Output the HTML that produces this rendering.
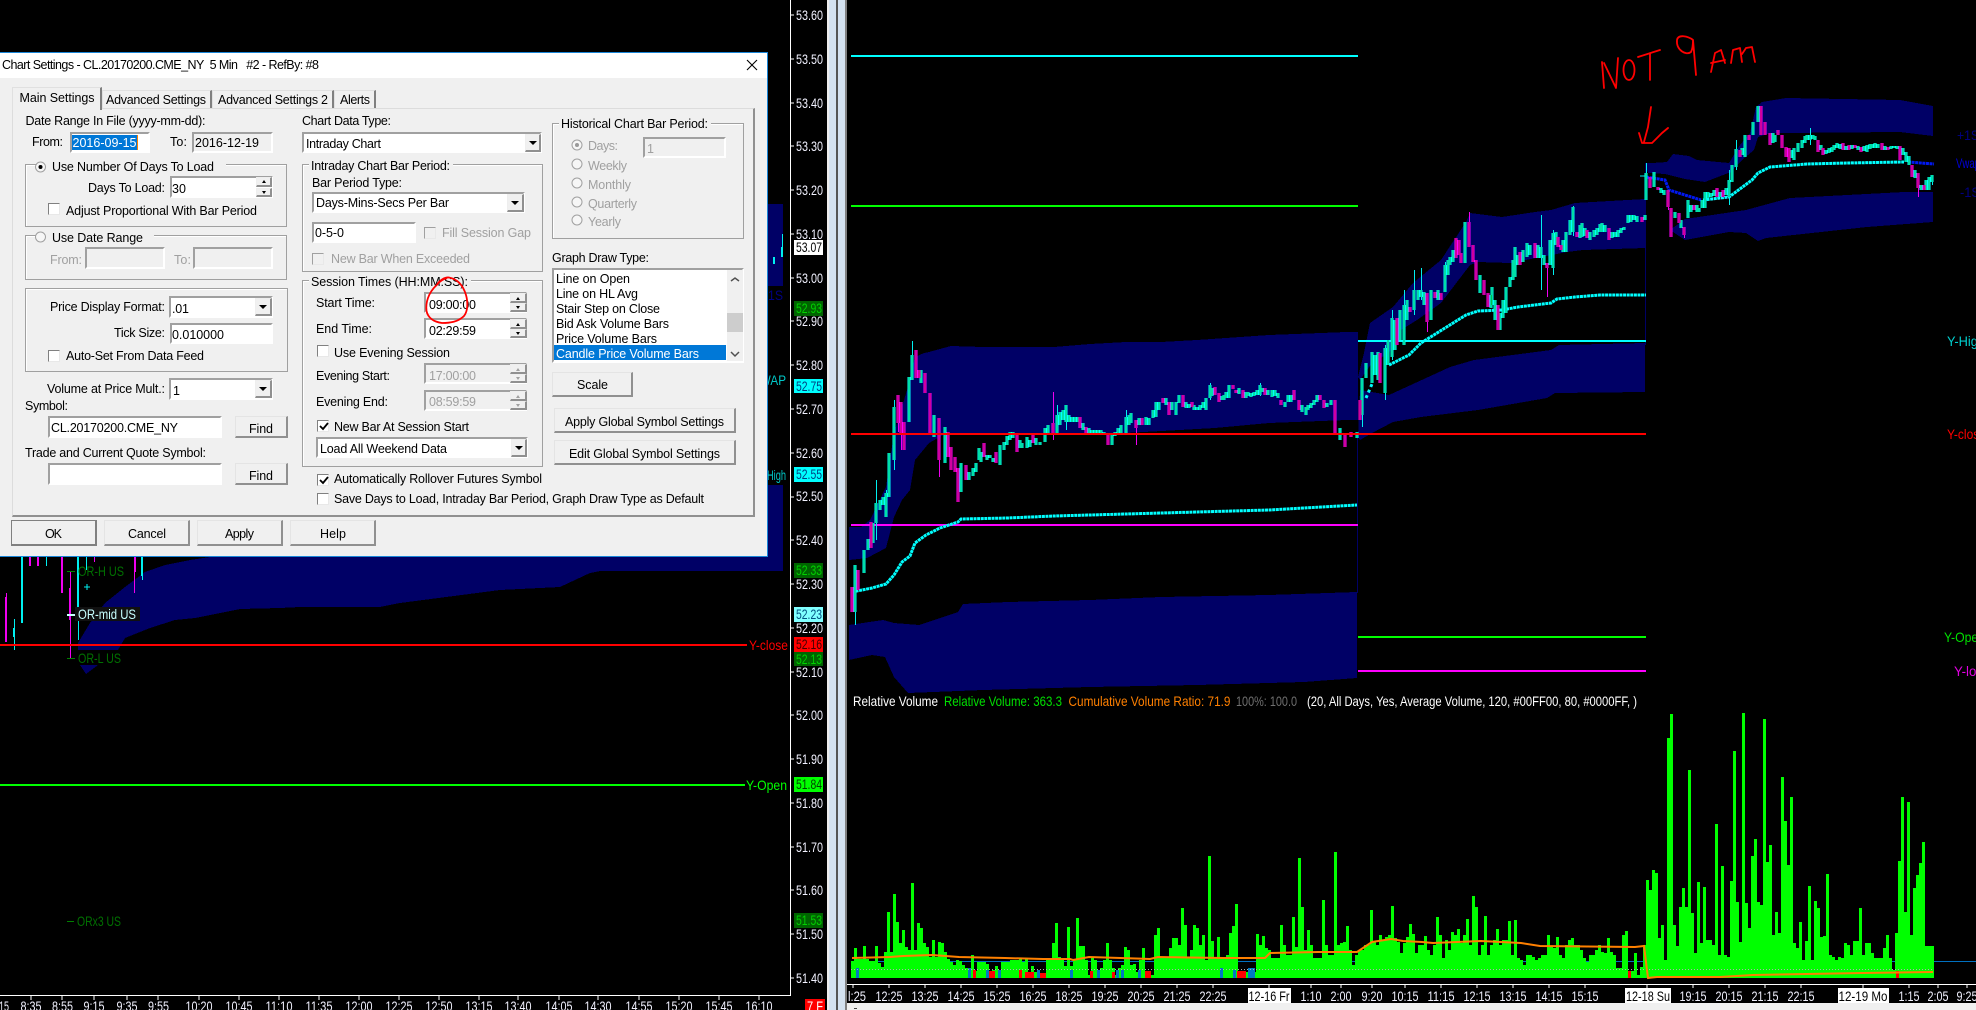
<!DOCTYPE html>
<html><head><meta charset="utf-8"><title>Chart Settings</title>
<style>
html,body{margin:0;padding:0;background:#000;width:1976px;height:1010px;overflow:hidden}
svg{position:absolute;left:0;top:0}
div{position:absolute;box-sizing:border-box}
.e{background:#fff;border:2px solid;border-color:#a0a0a0 #fff #fff #a0a0a0}
.r{background:#f0f0f0;border:2px solid;border-color:#a0a0a0 #fff #fff #a0a0a0}
.g{border:1px solid #a0a0a0;box-shadow:inset 1px 1px 0 #fff}
.b{background:#f0f0f0;border:solid;border-width:1px 2px 2px 1px;border-color:#e4e4e4 #909090 #909090 #e4e4e4}
.k{background:#f0f0f0;border:solid;border-width:1px 2px 2px 1px;border-color:#eee #909090 #909090 #eee}
.c{background:#fff;width:12px;height:12px;border:1px solid;border-color:#808080 #e8e8e8 #e8e8e8 #808080}
.x{background:#f0f0f0;width:12px;height:12px;border:1px solid;border-color:#a0a0a0 #e8e8e8 #e8e8e8 #a0a0a0}
.l{background:#f0f0f0}
.d text{font:12.5px "Liberation Sans",sans-serif;fill:#000}
.d .n text{fill:#a0a0a0}
.a text{font:14px "Liberation Sans",sans-serif;fill:#f2f2ff}
</style></head><body>

<svg width="1976" height="1010" viewBox="0 0 1976 1010" shape-rendering="crispEdges">
<defs>
<path id="u" fill="none" d="M855 565V612M864 550V573M868 539V550M873 523V543M876 503V523M880 500V510M883 497V505M886 493V517M889 453V497M894 407V460M909 377V422M912 355V380M921 370V383M934 415V437M945 427V463M961 463V492M969 472V480M973 468V476M976 463V472M979 448V460M981 452V462M987 455V460M990 455V458M993 458V462M1000 445V465M1004 442V450M1007 436V445M1010 432V440M1013 432V438M1020 440V448M1022 443V448M1027 437V448M1030 440V447M1036 438V445M1040 442V445M1045 428V442M1048 425V435M1057 415V433M1060 412V425M1063 410V420M1066 405V422M1069 415V422M1072 417V422M1075 417V422M1078 417V422M1083 423V430M1089 428V433M1092 430V433M1095 430V433M1098 430V433M1101 430V433M1104 432V435M1112 433V445M1115 432V436M1118 428V433M1121 425V433M1126 417V433M1129 415V425M1131 413V423M1139 418V425M1146 417V425M1149 418V425M1153 410V418M1156 402V417M1159 402V410M1166 398V405M1172 402V410M1176 402V415M1179 395V403M1186 402V408M1189 404V408M1194 405V410M1197 407V410M1200 405V410M1203 402V408M1206 398V410M1210 385V398M1212 388V396M1222 396V400M1224 395V400M1226 392V398M1229 385V398M1239 388V394M1246 392V398M1248 392V396M1251 393V397M1254 392V396M1257 390V395M1260 385V395M1262 388V392M1268 390V395M1272 390V397M1275 390V396M1278 393V398M1285 402V407M1288 395V402M1291 395V402M1302 405V412M1306 407V415M1308 405V410M1311 403V408M1314 400V405M1317 395V402M1327 403V407M1331 400V405M1340 428V440M1357 432V438M1362 378V415M1366 363V378M1372 352V383M1375 355V375M1378 352V380M1385 348V393M1388 340V365M1392 318V357M1395 320V350M1400 310V340M1404 305V345M1407 300V320M1414 290V310M1418 290V300M1421 290V297M1424 292V305M1431 290V320M1438 290V300M1445 265V292M1448 260V275M1450 257V265M1453 250V262M1465 222V263M1480 275V293M1491 295V308M1492 287V305M1495 300V320M1500 313V330M1503 300V318M1506 287V313M1510 277V287M1513 260V280M1515 247V277M1518 255V265M1523 250V262M1527 243V257M1530 245V255M1538 245V258M1541 247V258M1544 255V265M1550 240V265M1553 233V268M1556 232V245M1563 240V252M1566 232V252M1570 220V235M1573 207V232M1580 225V238M1582 223V237M1585 228V236M1590 232V240M1594 230V237M1597 228V235M1600 224V232M1602 223V232M1605 225V232M1612 232V238M1615 232V237M1618 230V237M1621 228V233M1624 227V230M1628 215V223M1631 215V222M1634 215V220M1637 216V222M1645 215V220M1646 173V200M1654 172V187M1661 188V193M1664 190V195M1675 212V218M1681 220V228M1688 200V218M1691 205V212M1697 205V212M1699 208V212M1702 200V208M1705 192V208M1708 192V198M1711 193V197M1714 190V196M1720 192V197M1726 188V195M1729 180V197M1732 165V182M1736 149V167M1742 148V155M1745 135V157M1753 122V135M1758 106V122M1773 133V143M1775 135V142M1791 150V158M1794 148V160M1798 143V152M1802 140V148M1805 136V143M1807 135V140M1810 135V140M1813 135V139M1815 136V140M1821 145V150M1826 150V154M1829 148V153M1832 147V152M1834 145V150M1837 143V148M1840 144V149M1846 146V150M1852 145V149M1858 146V150M1864 146V151M1867 145V152M1870 144V149M1872 144V148M1875 143V148M1878 144V148M1885 146V150M1891 146V149M1894 146V148M1897 146V149M1903 148V155M1906 152V162M1909 156V165M1915 170V178M1921 185V190M1926 180V190M1929 177V190M1932 175V182"/>
<path id="w" fill="none" d="M852 587V612M858 570V590M871 522V548M898 395V423M901 402V433M904 422V450M916 350V378M919 370V378M925 373V393M930 393V433M939 418V460M948 432V457M951 447V470M955 457V472M958 468V502M966 465V480M984 443V457M996 452V463M1017 433V452M1033 435V443M1053 423V433M1080 417V428M1086 427V433M1108 433V445M1136 420V428M1142 418V425M1163 398V403M1169 402V415M1183 395V407M1192 402V407M1215 387V395M1219 393V402M1233 385V389M1236 390V393M1243 390V398M1265 388V395M1281 400V405M1294 390V400M1299 400V410M1320 395V400M1324 400V408M1335 400V433M1345 433V447M1351 432V437M1360 400V420M1380 353V383M1397 318V345M1410 307V312M1427 293V322M1435 292V298M1441 293V300M1456 238V258M1459 240V255M1461 253V263M1469 222V247M1473 245V262M1476 260V280M1484 280V295M1488 293V307M1498 305V330M1520 252V265M1535 243V258M1547 263V268M1558 237V247M1561 245V250M1577 232V237M1587 230V238M1609 228V240M1642 217V222M1650 177V188M1658 187V190M1668 190V207M1671 208V237M1679 213V223M1684 227V235M1694 205V210M1717 188V197M1723 190V197M1740 150V157M1749 135V140M1761 106V135M1765 122V135M1770 133V145M1778 130V135M1782 135V148M1786 147V157M1789 148V162M1818 140V152M1823 148V155M1843 143V150M1849 145V150M1855 145V148M1861 147V152M1882 143V150M1888 147V150M1900 146V160M1912 165V177M1918 173V188M1924 185V190"/>
</defs>

<!-- left chart -->
<rect x="768" y="204" width="15" height="82" fill="#000066"/>
<path fill="#000066" d="M768 485H783V571H600L590 573 560 587 500 590 400 603 380 607 300 607 280 608 240 609 195 618 175 620 150 628 125 638 118 650 78 650 78 643 90 623 105 603 125 587 145 572 165 565 190 560 210 557H768Z"/>
<path fill="#000066" d="M80 665H98L86 674Z"/>
<g fill="none" stroke-width="2">
<path stroke="#f000f0" d="M6 597V642M30 557V566M38 557V566M62 557V593M70 588V620M135 557V572"/>
<path stroke="#00f0f0" d="M14 628V637M22 557V623M78 557V615M142 557V576M782 247V257M774 257V264"/>
</g>
<g fill="none" stroke-width="1">
<path stroke="#f000f0" d="M6.500 593V597M70.500 572V658M134.500 572V593M46.500 557V560M94.500 557V562"/>
<path stroke="#00f0f0" d="M14.500 619V650M46.500 557V566M78.500 615V640M86.500 557V570M142.500 576V580M782.500 234V247M84 587H90M87 584V590"/>
<path stroke="#008000" d="M67 571.500H75M67 658.500H75M67 921.500H74"/>
<path stroke="#c8ffff" stroke-width="2" d="M67 615H75"/>
</g>
<rect x="75" y="607" width="65" height="14" fill="#101010"/>
<rect x="0" y="644" width="747" height="2" fill="#ff0000"/>
<rect x="0" y="784" width="745" height="2" fill="#00ff00"/>

<!-- right chart bands -->
<g fill="#000066">
<path d="M849 527L861 527 870 520 886 487 894 433 908 387 915 357 924 353 929 352 951 346 983 347 1054 347 1090 344 1126 342 1161 342 1197 340 1269 335 1347 332V420L1269 423 1215 428 1126 433 947 433 929 443 915 460 910 490 902 500 894 517 886 548 867 558 849 560Z"/>
<path d="M849 625L883 620 894 623 919 625 958 612 963 604 1008 602 1090 600 1161 597 1269 595 1357 592V678L1304 682 1197 685 1090 687 983 690 908 693 894 677 885 657 872 655 849 660Z"/>
<path d="M1340 332H1358V420H1340Z"/>
<path d="M1358 377L1364 353 1370 323 1393 307 1413 283 1441 260 1466 222 1470 213 1502 217 1535 212 1551 210 1575 203 1645 199V248L1583 250 1567 252 1510 263 1478 262 1470 265 1441 303 1417 320 1401 330 1389 353 1372 363 1360 380Z"/>
<path d="M1360 390L1389 395 1437 373 1450 367 1474 360 1551 350 1559 345 1645 343V392L1555 393 1547 398 1478 410 1421 417 1393 422 1372 433 1360 440 1358 437Z"/>
<path d="M1645 163L1652 163 1667 162 1673 154 1689 156 1697 160 1729 163 1740 145 1750 133 1756 107 1762 102 1786 98 1900 100 1933 106V136L1900 132 1782 133 1770 133 1758 137 1754 150 1742 160 1731 172 1705 182 1685 179 1665 174 1648 173Z"/>
<path d="M1685 219L1746 210 1790 198 1904 192 1933 192V222L1867 227 1766 238 1758 241 1746 233 1729 232 1685 240 1670 230Z"/>
<rect x="1357" y="433" width="1" height="160"/>
<rect x="1645" y="163" width="1" height="182"/>
</g>

<!-- level lines -->
<rect x="851" y="55" width="507" height="2" fill="#00ffff"/>
<rect x="851" y="205" width="507" height="2" fill="#00ff00"/>
<rect x="851" y="524" width="507" height="2" fill="#ff00ff"/>
<rect x="1358" y="340" width="288" height="2" fill="#00ffff"/>
<rect x="1358" y="636" width="288" height="2" fill="#00ff00"/>
<rect x="1358" y="670" width="288" height="2" fill="#ff00ff"/>

<!-- vwap -->
<g fill="none" shape-rendering="auto">
<polyline stroke="#00ffff" stroke-width="3" stroke-dasharray="3 0.600" points="852,592 872,588 886,584 894,575 902,562 910,556 915,543 926,535 940,528 958,522 961,519 1008,518 1054,516 1126,514 1197,512 1269,510 1304,508 1357,505"/>
<polyline stroke="#00ffff" stroke-width="3" stroke-dasharray="3 0.600" points="1389,365 1409,355 1421,343 1445,328 1466,315 1478,311 1502,310 1518,307 1551,303 1557,299 1575,297 1600,295 1646,295"/>
<polyline stroke="#00ffff" stroke-width="3" stroke-dasharray="3 0.600" points="1703,200 1729,197 1752,180 1758,173 1770,167 1807,164 1847,163 1904,162"/>
<polyline stroke="#0018f0" stroke-width="3" stroke-dasharray="3 0.600" points="1646,177 1665,180 1669,190 1701,200"/>
<polyline stroke="#0018f0" stroke-width="3" stroke-dasharray="3 0.600" points="1908,162 1934,164"/>
<polyline stroke="#00ffff" stroke-width="3" stroke-dasharray="3 3" points="1366,398 1372,384"/>
</g>

<!-- wicks -->
<g fill="none" stroke-width="1">
<path stroke="#00f0f0" d="M855.500 565V625M876.500 480V540M886.500 490V510M894.500 400V470M912.500 341V360M1057.500 405V435M1066.500 405V430M1126.500 410V435M1210.500 383V400M1260.500 383V396M1362.500 378V427M1385.500 345V400M1392.500 310V360M1404.500 290V345M1414.500 270V315M1421.500 268V300M1445.500 262V292M1541.500 215V290M1553.500 230V275M1573.500 206V236M1646.500 163V200M1729.500 170V205M1736.500 140V170M1810.500 128V145M1932.500 175V185M1640 176H1646"/>
<path stroke="#f000f0" d="M898.500 395V432M939.500 418V477M958.500 468V502M901.500 402V450M1053.500 392V440M1017.500 433V452M1136.500 420V445M1345.500 433V447M1427.500 293V332M1469.500 212V247M1547.500 263V297M1668.500 190V210M1671.500 208V237M1684.500 227V238M1761.500 106V135M1918.500 173V197"/>
</g>

<!-- candles -->
<use href="#u" stroke="#00ffff" stroke-width="3"/>
<use href="#w" stroke="#ff00ff" stroke-width="3"/>
<use href="#u" stroke="#00c050" stroke-width="1"/>
<use href="#w" stroke="#a00040" stroke-width="1"/>
<rect x="851" y="433" width="795" height="2" fill="#ff0000"/>

<!-- volume -->
<rect x="851" y="961" width="1125" height="1" fill="#0070c0"/>
<path fill="#00ff00" d="M851 978V961H854V948H857V959H863V946H866V959H869V961H875V946H878V963H881V967H884V952H887V912H890V952H893V894H896V922H899V943H902V930H905V947H908V950H911V883H914V950H917V923H920V928H923V943H926V947H929V957H932V940H935V957H938V942H941V943H944V952H947V959H950V962H953V965H956V960H959V961H962V965H965V968H971V955H974V971H977V962H986V964H989V972H992V970H995V966H998V972H1001V962H1010V960H1019V958H1022V962H1025V958H1028V972H1031V966H1034V972H1040V974H1046V959H1052V943H1055V923H1058V957H1061V959H1064V966H1067V927H1070V966H1073V960H1076V918H1079V946H1085V960H1088V975H1091V958H1094V960H1097V975H1100V968H1103V960H1106V943H1109V960H1112V968H1115V975H1118V968H1121V965H1124V947H1127V950H1130V965H1133V964H1136V972H1139V960H1142V948H1145V975H1154V935H1157V928H1160V958H1169V948H1172V938H1178V945H1181V908H1184V925H1187V958H1190V950H1193V925H1196V928H1199V945H1202V935H1205V960H1208V856H1211V941H1214V958H1217V937H1220V958H1226V955H1229V933H1232V926H1235V904H1238V972H1256V934H1259V945H1262V936H1265V948H1268V950H1271V958H1280V925H1283V945H1286V955H1292V917H1295V947H1298V858H1301V907H1304V950H1307V930H1310V945H1313V958H1322V900H1325V945H1328V955H1334V852H1337V945H1340V943H1343V942H1346V926H1349V950H1352V965H1355V955H1358V950H1364V945H1370V910H1373V942H1376V945H1379V935H1382V940H1385V937H1388V935H1391V906H1394V938H1397V942H1400V953H1403V943H1406V937H1409V924H1412V934H1415V953H1418V945H1424V936H1427V950H1430V955H1433V945H1436V917H1439V935H1442V958H1445V940H1448V950H1451V932H1454V935H1457V929H1460V943H1463V935H1466V919H1469V945H1472V896H1475V907H1478V955H1481V945H1484V916H1487V955H1490V945H1493V940H1496V929H1499V945H1502V940H1508V921H1511V955H1514V920H1517V958H1520V960H1523V965H1526V955H1532V957H1535V960H1538V958H1541V955H1547V935H1550V947H1553V948H1556V937H1559V955H1562V958H1565V945H1568V940H1571V938H1574V945H1580V950H1583V958H1586V962H1589V955H1595V950H1598V945H1601V952H1604V953H1607V938H1610V952H1613V955H1616V968H1622V935H1625V931H1628V971H1634V953H1637V975H1640V967H1643V945H1646V880H1649V890H1652V870H1655V873H1658V938H1661V925H1664V960H1667V738H1670V714H1673V925H1676V946H1679V907H1682V888H1685V907H1688V770H1691V913H1694V953H1697V882H1700V943H1703V887H1706V940H1712V945H1715V824H1718V955H1721V866H1724V955H1727V957H1730V881H1733V751H1736V902H1739V942H1742V713H1745V903H1748V928H1751V856H1754V839H1757V902H1760V905H1763V719H1766V862H1769V845H1772V935H1775V912H1778V933H1781V777H1784V821H1787V865H1790V797H1793V943H1796V948H1799V922H1802V960H1805V941H1808V886H1811V960H1814V901H1817V908H1820V937H1823V936H1826V874H1829V955H1832V957H1835V960H1838V957H1841V958H1844V943H1847V945H1850V955H1853V941H1859V908H1862V955H1865V943H1871V953H1874V958H1883V948H1886V935H1889V958H1892V970H1895V933H1898V861H1901V797H1904V912H1907V802H1910V935H1913V888H1916V875H1919V863H1922V842H1925V946H1934V978Z"/>
<path fill="#ff0000" d="M973 970h3v8h-3zM989 971h6v7h-6zM1019 970h3v8h-3zM1025 972h9v6h-9zM1040 973h6v5h-6zM1090 971h3v7h-3zM1112 972h3v6h-3zM1145 971h6v7h-6zM1237 971h9v7h-9zM1628 971h3v7h-3zM1896 971h3v7h-3z"/>
<path fill="#0078c0" d="M856 968h3v10h-3zM968 968h3v10h-3zM986 970h3v8h-3zM998 970h3v8h-3zM1037 970h3v8h-3zM1070 970h3v8h-3zM1097 970h3v8h-3zM1116 970h3v8h-3zM1121 970h3v8h-3zM1138 970h3v8h-3zM1220 968h3v10h-3zM1233 970h3v8h-3zM1248 968h7v10h-7z"/>
<path stroke="#b0b0b0" fill="none" stroke-dasharray="1 2" d="M851 969.500H1934"/>
<g fill="none" shape-rendering="auto" stroke="#ff8000" stroke-width="2">
<polyline points="852,958 890,957 903,956 932,955 959,957 1005,958 1043,959 1070,959 1073,960 1089,957 1150,959 1158,957 1223,958 1265,958 1270,953 1318,952 1357,952 1372,942 1391,939 1403,941 1422,942 1433,943 1481,941 1521,943 1540,946 1635,947 1644,946 1648,978 1657,977 1720,977 1753,975 1863,973 1933,972"/>
</g>

<!-- axes -->
<rect x="790" y="0" width="1" height="995" fill="#fff"/>
<rect x="0" y="995" width="791" height="1" fill="#fff"/>
<rect x="847" y="984" width="1129" height="1" fill="#fff"/>
<path stroke="#fff" fill="none" d="M791 15h3M791 59h3M791 103h3M791 146h3M791 190h3M791 234h3M791 278h3M791 321h3M791 365h3M791 409h3M791 453h3M791 497h3M791 540h3M791 584h3M791 628h3M791 672h3M791 715h3M791 759h3M791 803h3M791 847h3M791 890h3M791 934h3M791 978h3M31 996v4M62 996v4M94 996v4M127 996v4M158 996v4M199 996v4M239 996v4M279 996v4M319 996v4M359 996v4M399 996v4M439 996v4M479 996v4M518 996v4M559 996v4M598 996v4M639 996v4M679 996v4M719 996v4M759 996v4M853 985v3M889 985v3M925 985v3M961 985v3M997 985v3M1033 985v3M1069 985v3M1105 985v3M1141 985v3M1177 985v3M1213 985v3M1269 985v3M1311 985v3M1341 985v3M1372 985v3M1405 985v3M1441 985v3M1477 985v3M1513 985v3M1549 985v3M1585 985v3M1647 985v3M1693 985v3M1729 985v3M1765 985v3M1801 985v3M1863 985v3M1909 985v3M1938 985v3M1967 985v3"/>

<!-- separator -->
<rect x="827" y="0" width="2" height="1010" fill="#eeeeee"/>
<rect x="829" y="0" width="7" height="1010" fill="#d4e2f0"/>
<rect x="836" y="0" width="2" height="1010" fill="#555555"/>
<rect x="838" y="0" width="7" height="1010" fill="#d4e2f0"/>
<rect x="845" y="0" width="2" height="1010" fill="#808080"/>
<rect x="847" y="1003" width="1129" height="7" fill="#f0f0f0"/>
<rect x="854" y="1008" width="3" height="1" fill="#444"/>
<rect x="805" y="999" width="20" height="11" fill="#ff0000"/>

<!-- price label boxes -->
<rect x="794" y="240" width="29" height="15" fill="#ffffff"/>
<rect x="794" y="301" width="29" height="15" fill="#006400"/>
<rect x="794" y="379" width="29" height="14" fill="#00ffff"/>
<rect x="794" y="467" width="29" height="15" fill="#00ffff"/>
<rect x="794" y="563" width="29" height="15" fill="#006400"/>
<rect x="794" y="607" width="29" height="15" fill="#80ffff"/>
<rect x="794" y="637" width="29" height="15" fill="#ff0000"/>
<rect x="794" y="652" width="29" height="14" fill="#006400"/>
<rect x="794" y="777" width="29" height="15" fill="#00ff00"/>
<rect x="794" y="913" width="29" height="15" fill="#006400"/>
<rect x="1248" y="988" width="43" height="15" fill="#fff"/>
<rect x="1625" y="988" width="46" height="15" fill="#fff"/>
<rect x="1838" y="988" width="51" height="15" fill="#fff"/>
</svg>

<svg width="1976" height="1010" viewBox="0 0 1976 1010" class="a">
<g>
<text x="796" y="20" textLength="27" lengthAdjust="spacingAndGlyphs">53.60</text>
<text x="796" y="64" textLength="27" lengthAdjust="spacingAndGlyphs">53.50</text>
<text x="796" y="108" textLength="27" lengthAdjust="spacingAndGlyphs">53.40</text>
<text x="796" y="151" textLength="27" lengthAdjust="spacingAndGlyphs">53.30</text>
<text x="796" y="195" textLength="27" lengthAdjust="spacingAndGlyphs">53.20</text>
<text x="796" y="239" textLength="27" lengthAdjust="spacingAndGlyphs">53.10</text>
<text x="796" y="283" textLength="27" lengthAdjust="spacingAndGlyphs">53.00</text>
<text x="796" y="326" textLength="27" lengthAdjust="spacingAndGlyphs">52.90</text>
<text x="796" y="370" textLength="27" lengthAdjust="spacingAndGlyphs">52.80</text>
<text x="796" y="414" textLength="27" lengthAdjust="spacingAndGlyphs">52.70</text>
<text x="796" y="458" textLength="27" lengthAdjust="spacingAndGlyphs">52.60</text>
<text x="796" y="501" textLength="27" lengthAdjust="spacingAndGlyphs">52.50</text>
<text x="796" y="545" textLength="27" lengthAdjust="spacingAndGlyphs">52.40</text>
<text x="796" y="589" textLength="27" lengthAdjust="spacingAndGlyphs">52.30</text>
<text x="796" y="633" textLength="27" lengthAdjust="spacingAndGlyphs">52.20</text>
<text x="796" y="677" textLength="27" lengthAdjust="spacingAndGlyphs">52.10</text>
<text x="796" y="720" textLength="27" lengthAdjust="spacingAndGlyphs">52.00</text>
<text x="796" y="764" textLength="27" lengthAdjust="spacingAndGlyphs">51.90</text>
<text x="796" y="808" textLength="27" lengthAdjust="spacingAndGlyphs">51.80</text>
<text x="796" y="852" textLength="27" lengthAdjust="spacingAndGlyphs">51.70</text>
<text x="796" y="895" textLength="27" lengthAdjust="spacingAndGlyphs">51.60</text>
<text x="796" y="939" textLength="27" lengthAdjust="spacingAndGlyphs">51.50</text>
<text x="796" y="983" textLength="27" lengthAdjust="spacingAndGlyphs">51.40</text>
</g>
<text x="796" y="252" textLength="26" lengthAdjust="spacingAndGlyphs" style="fill:#000">53.07</text>
<text x="796" y="313" textLength="26" lengthAdjust="spacingAndGlyphs" style="fill:#00d000">52.93</text>
<text x="796" y="391" textLength="26" lengthAdjust="spacingAndGlyphs" style="fill:#004080">52.75</text>
<text x="796" y="479" textLength="26" lengthAdjust="spacingAndGlyphs" style="fill:#004080">52.55</text>
<text x="796" y="575" textLength="26" lengthAdjust="spacingAndGlyphs" style="fill:#00d000">52.33</text>
<text x="796" y="619" textLength="26" lengthAdjust="spacingAndGlyphs" style="fill:#005080">52.23</text>
<text x="796" y="649" textLength="26" lengthAdjust="spacingAndGlyphs" style="fill:#400000">52.16</text>
<text x="796" y="664" textLength="26" lengthAdjust="spacingAndGlyphs" style="fill:#00d000">52.13</text>
<text x="796" y="789" textLength="26" lengthAdjust="spacingAndGlyphs" style="fill:#004000">51.84</text>
<text x="796" y="925" textLength="26" lengthAdjust="spacingAndGlyphs" style="fill:#00d000">51.53</text>
<text x="752" y="385" style="fill:#00c8c8" textLength="34" lengthAdjust="spacingAndGlyphs">VWAP</text>
<text x="750" y="480" style="fill:#00c8c8" textLength="36" lengthAdjust="spacingAndGlyphs">OR-High</text>
<text x="768" y="300" style="fill:#000080" textLength="15" lengthAdjust="spacingAndGlyphs">1S</text>
<text x="749" y="650" style="fill:#ff0000" textLength="39" lengthAdjust="spacingAndGlyphs">Y-close</text>
<text x="746" y="790" style="fill:#00ff00" textLength="41" lengthAdjust="spacingAndGlyphs">Y-Open</text>
<text x="78" y="576" style="fill:#007000" textLength="46" lengthAdjust="spacingAndGlyphs">OR-H US</text>
<text x="78" y="619" style="fill:#c8ffff" textLength="58" lengthAdjust="spacingAndGlyphs">OR-mid US</text>
<text x="78" y="663" style="fill:#007000" textLength="43" lengthAdjust="spacingAndGlyphs">OR-L US</text>
<text x="77" y="926" style="fill:#007000" textLength="44" lengthAdjust="spacingAndGlyphs">ORx3 US</text>
<text x="807" y="1011" style="fill:#fff" textLength="16" lengthAdjust="spacingAndGlyphs">7 F</text>
<g text-anchor="middle">
<text x="4" y="1011" textLength="10" lengthAdjust="spacingAndGlyphs">15</text>
<text x="31" y="1011" textLength="21" lengthAdjust="spacingAndGlyphs">8:35</text>
<text x="62.500" y="1011" textLength="21" lengthAdjust="spacingAndGlyphs">8:55</text>
<text x="94" y="1011" textLength="21" lengthAdjust="spacingAndGlyphs">9:15</text>
<text x="127" y="1011" textLength="21" lengthAdjust="spacingAndGlyphs">9:35</text>
<text x="158.500" y="1011" textLength="21" lengthAdjust="spacingAndGlyphs">9:55</text>
<text x="199" y="1011" textLength="27" lengthAdjust="spacingAndGlyphs">10:20</text>
<text x="239" y="1011" textLength="27" lengthAdjust="spacingAndGlyphs">10:45</text>
<text x="279" y="1011" textLength="27" lengthAdjust="spacingAndGlyphs">11:10</text>
<text x="319" y="1011" textLength="27" lengthAdjust="spacingAndGlyphs">11:35</text>
<text x="359" y="1011" textLength="27" lengthAdjust="spacingAndGlyphs">12:00</text>
<text x="399" y="1011" textLength="27" lengthAdjust="spacingAndGlyphs">12:25</text>
<text x="439" y="1011" textLength="27" lengthAdjust="spacingAndGlyphs">12:50</text>
<text x="479" y="1011" textLength="27" lengthAdjust="spacingAndGlyphs">13:15</text>
<text x="518" y="1011" textLength="27" lengthAdjust="spacingAndGlyphs">13:40</text>
<text x="559" y="1011" textLength="27" lengthAdjust="spacingAndGlyphs">14:05</text>
<text x="598" y="1011" textLength="27" lengthAdjust="spacingAndGlyphs">14:30</text>
<text x="639" y="1011" textLength="27" lengthAdjust="spacingAndGlyphs">14:55</text>
<text x="679" y="1011" textLength="27" lengthAdjust="spacingAndGlyphs">15:20</text>
<text x="719" y="1011" textLength="27" lengthAdjust="spacingAndGlyphs">15:45</text>
<text x="759" y="1011" textLength="27" lengthAdjust="spacingAndGlyphs">16:10</text>
<text x="857" y="1001" textLength="18" lengthAdjust="spacingAndGlyphs">l:25</text>
<text x="889" y="1001" textLength="27" lengthAdjust="spacingAndGlyphs">12:25</text>
<text x="925" y="1001" textLength="27" lengthAdjust="spacingAndGlyphs">13:25</text>
<text x="961" y="1001" textLength="27" lengthAdjust="spacingAndGlyphs">14:25</text>
<text x="997" y="1001" textLength="27" lengthAdjust="spacingAndGlyphs">15:25</text>
<text x="1033" y="1001" textLength="27" lengthAdjust="spacingAndGlyphs">16:25</text>
<text x="1069" y="1001" textLength="27" lengthAdjust="spacingAndGlyphs">18:25</text>
<text x="1105" y="1001" textLength="27" lengthAdjust="spacingAndGlyphs">19:25</text>
<text x="1141" y="1001" textLength="27" lengthAdjust="spacingAndGlyphs">20:25</text>
<text x="1177" y="1001" textLength="27" lengthAdjust="spacingAndGlyphs">21:25</text>
<text x="1213" y="1001" textLength="27" lengthAdjust="spacingAndGlyphs">22:25</text>
<text x="1269" y="1001" textLength="41" lengthAdjust="spacingAndGlyphs" style="fill:#000">12-16 Fr</text>
<text x="1311" y="1001" textLength="21" lengthAdjust="spacingAndGlyphs">1:10</text>
<text x="1341" y="1001" textLength="21" lengthAdjust="spacingAndGlyphs">2:00</text>
<text x="1372" y="1001" textLength="21" lengthAdjust="spacingAndGlyphs">9:20</text>
<text x="1405" y="1001" textLength="27" lengthAdjust="spacingAndGlyphs">10:15</text>
<text x="1441" y="1001" textLength="27" lengthAdjust="spacingAndGlyphs">11:15</text>
<text x="1477" y="1001" textLength="27" lengthAdjust="spacingAndGlyphs">12:15</text>
<text x="1513" y="1001" textLength="27" lengthAdjust="spacingAndGlyphs">13:15</text>
<text x="1549" y="1001" textLength="27" lengthAdjust="spacingAndGlyphs">14:15</text>
<text x="1585" y="1001" textLength="27" lengthAdjust="spacingAndGlyphs">15:15</text>
<text x="1648" y="1001" textLength="44" lengthAdjust="spacingAndGlyphs" style="fill:#000">12-18 Su</text>
<text x="1693" y="1001" textLength="27" lengthAdjust="spacingAndGlyphs">19:15</text>
<text x="1729" y="1001" textLength="27" lengthAdjust="spacingAndGlyphs">20:15</text>
<text x="1765" y="1001" textLength="27" lengthAdjust="spacingAndGlyphs">21:15</text>
<text x="1801" y="1001" textLength="27" lengthAdjust="spacingAndGlyphs">22:15</text>
<text x="1863" y="1001" textLength="49" lengthAdjust="spacingAndGlyphs" style="fill:#000">12-19 Mo</text>
<text x="1909" y="1001" textLength="21" lengthAdjust="spacingAndGlyphs">1:15</text>
<text x="1938" y="1001" textLength="21" lengthAdjust="spacingAndGlyphs">2:05</text>
<text x="1967" y="1001" textLength="21" lengthAdjust="spacingAndGlyphs">9:25</text>
</g>
<text x="853" y="706" textLength="85" lengthAdjust="spacingAndGlyphs" style="fill:#fff">Relative Volume</text>
<text x="944" y="706" textLength="118" lengthAdjust="spacingAndGlyphs" style="fill:#00e000">Relative Volume: 363.3</text>
<text x="1068.500" y="706" textLength="162" lengthAdjust="spacingAndGlyphs" style="fill:#ff8000">Cumulative Volume Ratio: 71.9</text>
<text x="1236" y="706" textLength="61" lengthAdjust="spacingAndGlyphs" style="fill:#707070">100%: 100.0</text>
<text x="1307" y="706" textLength="330" lengthAdjust="spacingAndGlyphs" style="fill:#fff">(20, All Days, Yes, Average Volume, 120, #00FF00, 80, #0000FF, )</text>
<text x="1957" y="140" style="fill:#000080" textLength="22" lengthAdjust="spacingAndGlyphs">+1S</text>
<text x="1956" y="168" style="fill:#0000e0" textLength="24" lengthAdjust="spacingAndGlyphs">Vwap</text>
<text x="1960" y="197" style="fill:#000080" textLength="20" lengthAdjust="spacingAndGlyphs">-1S</text>
<text x="1947" y="346" style="fill:#00d0d0" textLength="38" lengthAdjust="spacingAndGlyphs">Y-High</text>
<text x="1947" y="439" style="fill:#ff0000" textLength="39" lengthAdjust="spacingAndGlyphs">Y-close</text>
<text x="1944" y="642" style="fill:#00e000" textLength="41" lengthAdjust="spacingAndGlyphs">Y-Open</text>
<text x="1954" y="676" style="fill:#e000e0" textLength="32" lengthAdjust="spacingAndGlyphs">Y-low</text>
<g fill="none" stroke="#ff0000" stroke-width="1.800" stroke-linecap="round" stroke-linejoin="round">
<path d="M1602 62L1604 88M1604 63L1616 88 1618 58"/>
<ellipse cx="1629" cy="70" rx="5.500" ry="10"/>
<path d="M1638 57L1660 50M1650 53L1650 80"/>
<path d="M1693 40C1688 36 1678 34 1677 40C1676 50 1686 56 1691 52C1693 48 1693 44 1693 40L1696 75"/>
<path d="M1711 72L1715 53 1721 50 1725 63M1711 63L1725 60"/>
<path d="M1731 63L1733 50 1740 48 1742 62M1742 54L1746 48 1752 47 1755 62"/>
<path d="M1651 107L1648 127 1644 142M1639 133L1642 143 1652 143 1662 133 1668 128"/>
</g>
</svg>

<!-- dialog -->
<div style="left:-2px;top:52px;width:770px;height:505px;background:#f0f0f0;border:1px solid #1a86d8"></div>
<div style="left:0;top:53px;width:767px;height:25px;background:#fff"></div>
<div style="left:12px;top:108px;width:743px;height:409px;background:#f0f0f0;border:solid;border-width:1px 2px 2px 1px;border-color:#dcdcdc #909090 #909090 #dcdcdc"></div>
<!-- tabs -->
<div style="left:102px;top:90px;width:110px;height:18px;background:#f0f0f0;border:solid;border-width:1px 2px 0 1px;border-color:#e0e0e0 #808080 #e0e0e0 #e0e0e0"></div>
<div style="left:212px;top:90px;width:122px;height:18px;background:#f0f0f0;border:solid;border-width:1px 2px 0 1px;border-color:#e0e0e0 #808080 #e0e0e0 #e0e0e0"></div>
<div style="left:334px;top:90px;width:42px;height:18px;background:#f0f0f0;border:solid;border-width:1px 2px 0 1px;border-color:#e0e0e0 #808080 #e0e0e0 #e0e0e0"></div>
<div style="left:12px;top:87px;width:90px;height:23px;background:#f0f0f0;border:solid;border-width:1px 2px 0 1px;border-color:#e0e0e0 #808080 #e0e0e0 #e0e0e0"></div>

<!-- groups -->
<div class="g" style="left:25px;top:164px;width:262px;height:63px"></div>
<div class="l" style="left:36px;top:160px;width:190px;height:8px"></div>
<div class="g" style="left:25px;top:235px;width:262px;height:45px"></div>
<div class="l" style="left:36px;top:231px;width:118px;height:8px"></div>
<div class="g" style="left:25px;top:288px;width:263px;height:84px"></div>
<div class="g" style="left:302px;top:164px;width:241px;height:108px"></div>
<div class="l" style="left:309px;top:160px;width:144px;height:8px"></div>
<div class="g" style="left:302px;top:280px;width:241px;height:187px"></div>
<div class="l" style="left:309px;top:276px;width:162px;height:8px"></div>
<div class="g" style="left:552px;top:123px;width:192px;height:116px"></div>
<div class="l" style="left:559px;top:119px;width:152px;height:8px"></div>

<!-- edits -->
<div class="e" style="left:70px;top:132px;width:80px;height:21px"></div>
<div style="left:72px;top:135px;width:65px;height:15px;background:#0078d7"></div>
<div style="left:137px;top:135px;width:1px;height:15px;background:#ff8000"></div>
<div class="r" style="left:192px;top:132px;width:81px;height:21px"></div>
<div class="e" style="left:170px;top:176px;width:103px;height:22px"></div>
<div class="r" style="left:85px;top:247px;width:80px;height:22px"></div>
<div class="r" style="left:193px;top:247px;width:80px;height:22px"></div>
<div class="e" style="left:169px;top:296px;width:104px;height:22px"></div>
<div class="e" style="left:170px;top:323px;width:103px;height:21px"></div>
<div class="e" style="left:169px;top:378px;width:104px;height:22px"></div>
<div class="e" style="left:48px;top:416px;width:174px;height:22px"></div>
<div class="e" style="left:48px;top:463px;width:174px;height:22px"></div>
<div class="e" style="left:302px;top:132px;width:240px;height:21px"></div>
<div class="e" style="left:312px;top:192px;width:213px;height:21px"></div>
<div class="e" style="left:312px;top:222px;width:104px;height:21px"></div>
<div class="e" style="left:424px;top:292px;width:103px;height:21px"></div>
<div class="e" style="left:424px;top:318px;width:103px;height:21px"></div>
<div class="r" style="left:424px;top:363px;width:103px;height:21px"></div>
<div class="r" style="left:424px;top:390px;width:103px;height:21px"></div>
<div class="e" style="left:316px;top:437px;width:212px;height:21px"></div>
<div class="r" style="left:643px;top:137px;width:83px;height:21px"></div>
<div class="e" style="left:552px;top:268px;width:192px;height:95px"></div>
<div style="left:554px;top:345px;width:172px;height:15px;background:#0078d7"></div>
<div style="left:727px;top:270px;width:16px;height:91px;background:#f0f0f0"></div>
<div style="left:727px;top:313px;width:16px;height:19px;background:#cdcdcd"></div>

<!-- combo arrow / spin buttons -->
<div class="k" style="left:256px;top:177px;width:16px;height:10px"></div>
<div class="k" style="left:256px;top:188px;width:16px;height:9px"></div>
<div class="k" style="left:255px;top:298px;width:17px;height:18px"></div>
<div class="k" style="left:255px;top:380px;width:17px;height:18px"></div>
<div class="k" style="left:525px;top:134px;width:16px;height:18px"></div>
<div class="k" style="left:507px;top:194px;width:17px;height:18px"></div>
<div class="k" style="left:511px;top:439px;width:16px;height:18px"></div>
<div class="k" style="left:510px;top:293px;width:17px;height:10px"></div>
<div class="k" style="left:510px;top:303px;width:17px;height:9px"></div>
<div class="k" style="left:510px;top:319px;width:17px;height:10px"></div>
<div class="k" style="left:510px;top:329px;width:17px;height:9px"></div>
<div class="k" style="left:510px;top:364px;width:17px;height:10px"></div>
<div class="k" style="left:510px;top:374px;width:17px;height:9px"></div>
<div class="k" style="left:510px;top:391px;width:17px;height:10px"></div>
<div class="k" style="left:510px;top:401px;width:17px;height:9px"></div>

<!-- checkboxes -->
<div class="c" style="left:48px;top:203px"></div>
<div class="c" style="left:48px;top:350px"></div>
<div class="x" style="left:424px;top:227px"></div>
<div class="x" style="left:312px;top:253px"></div>
<div class="c" style="left:317px;top:345px"></div>
<div class="c" style="left:317px;top:420px"></div>
<div class="c" style="left:317px;top:474px"></div>
<div class="c" style="left:317px;top:493px"></div>

<!-- buttons -->
<div class="b" style="left:235px;top:416px;width:53px;height:22px"></div>
<div class="b" style="left:235px;top:463px;width:53px;height:22px"></div>
<div class="b" style="left:552px;top:372px;width:81px;height:25px"></div>
<div class="b" style="left:554px;top:408px;width:182px;height:25px"></div>
<div class="b" style="left:554px;top:440px;width:182px;height:25px"></div>
<div style="left:11px;top:520px;width:86px;height:26px;background:#f0f0f0;border:solid #808080;border-width:1px 2px 2px 1px"></div>
<div class="b" style="left:104px;top:520px;width:86px;height:26px"></div>
<div class="b" style="left:197px;top:520px;width:86px;height:26px"></div>
<div class="b" style="left:290px;top:520px;width:86px;height:26px"></div>

<svg width="1976" height="1010" viewBox="0 0 1976 1010" class="d">
<text x="2" y="69" textLength="317">Chart Settings - CL.20170200.CME_NY&#160;&#160;5 Min&#160;&#160;&#160;#2 - RefBy: #8</text>
<path d="M747 60L757 70M757 60L747 70" stroke="#000" stroke-width="1.100" fill="none"/>
<text x="19.500" y="102" textLength="75">Main Settings</text>
<text x="106" y="104" textLength="100">Advanced Settings</text>
<text x="218" y="104" textLength="110">Advanced Settings 2</text>
<text x="340" y="104" textLength="30">Alerts</text>
<text x="25.500" y="125" textLength="180">Date Range In File (yyyy-mm-dd):</text>
<text x="32" y="146" textLength="31">From:</text>
<text x="72.500" y="147" textLength="64" style="fill:#fff">2016-09-15</text>
<text x="170" y="146" textLength="17">To:</text>
<text x="195" y="147" textLength="64">2016-12-19</text>
<text x="52" y="171" textLength="162">Use Number Of Days To Load</text>
<text x="88" y="192" textLength="77">Days To Load:</text>
<text x="172" y="193" textLength="14">30</text>
<text x="66" y="215" textLength="191">Adjust Proportional With Bar Period</text>
<text x="52" y="242" textLength="91">Use Date Range</text>
<g class="n">
<text x="50" y="264" textLength="32">From:</text>
<text x="174" y="264" textLength="17">To:</text>
<text x="442" y="237" textLength="89">Fill Session Gap</text>
<text x="331" y="263" textLength="139">New Bar When Exceeded</text>
<text x="429" y="380" textLength="47">17:00:00</text>
<text x="429" y="406" textLength="47">08:59:59</text>
<text x="588" y="150" textLength="30">Days:</text>
<text x="588" y="170" textLength="39">Weekly</text>
<text x="588" y="189" textLength="43">Monthly</text>
<text x="588" y="208" textLength="49">Quarterly</text>
<text x="588" y="226" textLength="33">Yearly</text>
<text x="647" y="153">1</text>
</g>
<text x="50" y="311" textLength="115">Price Display Format:</text>
<text x="172" y="313" textLength="17">.01</text>
<text x="114" y="337" textLength="51">Tick Size:</text>
<text x="172" y="339" textLength="52">0.010000</text>
<text x="66" y="360" textLength="138">Auto-Set From Data Feed</text>
<text x="47" y="393" textLength="118">Volume at Price Mult.:</text>
<text x="173" y="395">1</text>
<text x="25" y="410" textLength="43">Symbol:</text>
<text x="51" y="432" textLength="127">CL.20170200.CME_NY</text>
<text x="249" y="433" textLength="24">Find</text>
<text x="25" y="457" textLength="181">Trade and Current Quote Symbol:</text>
<text x="249" y="480" textLength="24">Find</text>
<text x="45" y="538" textLength="17">OK</text>
<text x="128" y="538" textLength="38">Cancel</text>
<text x="225" y="538" textLength="29">Apply</text>
<text x="320" y="538" textLength="26">Help</text>
<text x="302" y="125" textLength="89">Chart Data Type:</text>
<text x="306" y="148" textLength="75">Intraday Chart</text>
<text x="311" y="170" textLength="139">Intraday Chart Bar Period:</text>
<text x="312" y="187" textLength="90">Bar Period Type:</text>
<text x="316" y="207" textLength="133">Days-Mins-Secs Per Bar</text>
<text x="315" y="237" textLength="29">0-5-0</text>
<text x="311" y="286" textLength="157">Session Times (HH:MM:SS):</text>
<text x="316" y="307" textLength="59">Start Time:</text>
<text x="429" y="309" textLength="47">09:00:00</text>
<text x="316" y="333" textLength="56">End Time:</text>
<text x="429" y="335" textLength="47">02:29:59</text>
<text x="334" y="357" textLength="116">Use Evening Session</text>
<text x="316" y="380" textLength="74">Evening Start:</text>
<text x="316" y="406" textLength="72">Evening End:</text>
<text x="334" y="431" textLength="135">New Bar At Session Start</text>
<text x="320" y="453" textLength="127">Load All Weekend Data</text>
<text x="334" y="483" textLength="208">Automatically Rollover Futures Symbol</text>
<text x="334" y="503" textLength="370">Save Days to Load, Intraday Bar Period, Graph Draw Type as Default</text>
<text x="561" y="128" textLength="147">Historical Chart Bar Period:</text>
<text x="552" y="262" textLength="97">Graph Draw Type:</text>
<text x="556" y="283" textLength="74">Line on Open</text>
<text x="556" y="298" textLength="82">Line on HL Avg</text>
<text x="556" y="313" textLength="104">Stair Step on Close</text>
<text x="556" y="328" textLength="113">Bid Ask Volume Bars</text>
<text x="556" y="343" textLength="101">Price Volume Bars</text>
<text x="556" y="358" textLength="143" style="fill:#fff">Candle Price Volume Bars</text>
<text x="577" y="389" textLength="31">Scale</text>
<text x="565" y="426" textLength="159">Apply Global Symbol Settings</text>
<text x="569" y="458" textLength="151">Edit Global Symbol Settings</text>

<!-- radios -->
<g fill="#f6f6f6" stroke="#a0a0a0">
<circle cx="40.500" cy="167" r="5"/><circle cx="40.500" cy="237" r="5"/>
<circle cx="577" cy="145" r="5"/><circle cx="577" cy="164" r="5"/><circle cx="577" cy="183" r="5"/><circle cx="577" cy="202" r="5"/><circle cx="577" cy="220" r="5"/>
</g>
<circle cx="40.500" cy="167" r="2" fill="#000"/>
<circle cx="577" cy="145" r="2" fill="#999"/>

<!-- arrows -->
<path fill="#000" d="M259 305h8l-4 4zM259 387h8l-4 4zM529 141h8l-4 4zM511 201h8l-4 4zM515 446h8l-4 4zM262 183l2-3 2 3zM262 191h4l-2 3zM516 300l2-3 2 3zM516 306h4l-2 3zM516 326l2-3 2 3zM516 332h4l-2 3z"/>
<path fill="#a0a0a0" d="M516 371l2-3 2 3zM516 377h4l-2 3zM516 398l2-3 2 3zM516 404h4l-2 3z"/>
<path fill="none" stroke="#505050" stroke-width="1.500" d="M731 281l4-3 4 3M731 352l4 4 4-4"/>
<!-- checks -->
<path fill="none" stroke="#000" stroke-width="1.800" d="M320 426l3 3 5-6M320 480l3 3 5-6"/>
<!-- red circle -->
<path fill="none" stroke="#ff0000" stroke-width="1.800" d="M436.700 285C440 280 445 277 449 277.500C457 279 463 285 466 295C468 302 468 311 464 316C458 322 450 323 442 323C434 322 428 318 426.500 311C425.500 303 428 293 436.700 285C440 281 443 279 447 278.300"/>
</svg>
</body></html>
